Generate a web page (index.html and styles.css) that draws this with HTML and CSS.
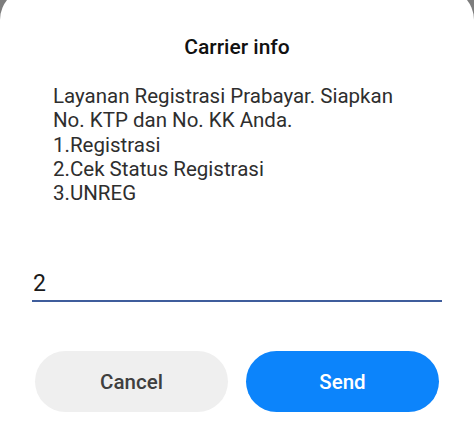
FILE: index.html
```html
<!doctype html>
<html lang="en">
	<head>
		<meta charset="UTF-8" />
		<meta name="viewport" content="width=device-width, initial-scale=1.0" />
		<title>Carrier info</title>
		<link rel="stylesheet" href="styles.css">
	</head>
	<body>
		<div class="dialog">
			<h1 class="title">Carrier info</h1>
			<div class="message">
				Layanan Registrasi Prabayar. Siapkan<br>
				No. KTP dan No. KK Anda.<br>
				1.Registrasi<br>
				2.Cek Status Registrasi<br>
				3.UNREG
			</div>
			<div class="reply">2</div>
			<div class="actions">
				<button class="btn btn-cancel">Cancel</button>
				<button class="btn btn-send">Send</button>
			</div>
		</div>
	</body>
</html>
```

FILE: styles.css
```css
html, body {
	margin: 0;
	height: 100%;
	background: #7d7d7d;
	overflow: hidden;
}
body {
	font-family: Roboto, "Noto Sans", sans-serif;
}
.dialog {
	margin-top: -12px;
	background: #fff;
	border-radius: 32px 32px 0 0;
	padding: 47px 32px 30px;
}
.title {
	margin: 0;
	font-family: "Roboto Medium", Roboto, sans-serif;
	font-size: 21px;
	line-height: 24px;
	font-weight: 500;
	color: #111;
	text-align: center;
}
.message {
	margin-top: 25px;
	padding-left: 21px;
	font-size: 20.5px;
	line-height: 24.3px;
	color: #2e2e2e;
}
.reply {
	margin-top: 66px;
	padding: 0 1px 3px;
	font-size: 23px;
	line-height: 26px;
	color: #1a1a1a;
	border-bottom: 2px solid #3f5d9c;
}
.actions {
	display: flex;
	gap: 18px;
	margin: 49px 3px 0;
}
.btn {
	flex: 1;
	height: 61px;
	border: none;
	border-radius: 31px;
	font-family: "Roboto Medium", Roboto, sans-serif;
	font-size: 20.5px;
	font-weight: 500;
	cursor: pointer;
}
.btn-cancel {
	background: #efefef;
	color: #3f3f3f;
}
.btn-send {
	background: #0c84fb;
	color: #fff;
}
```
